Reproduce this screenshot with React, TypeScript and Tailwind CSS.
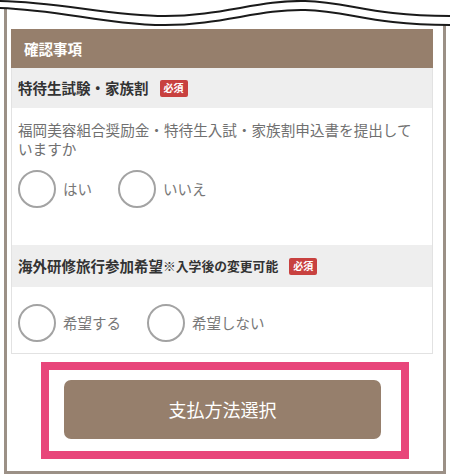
import React from "react";

const font = { fontFamily: '"Noto Sans CJK JP", "Noto Sans", sans-serif' };

function Radio({ label }: { label: string }) {
  return (
    <div className="flex items-center mr-[26px]">
      <div className="w-[38px] h-[38px] rounded-full border-2 border-[#a3a3a3] bg-white" />
      <span className="ml-[7px] text-[14.5px] text-[#777] leading-none">{label}</span>
    </div>
  );
}

function Badge() {
  return (
    <span className="ml-[11px] inline-flex items-center justify-center h-[17px] px-[4px] rounded-[2px] bg-[#c8413f] text-white text-[10px] font-bold leading-none">
      必須
    </span>
  );
}

export default function App() {
  return (
    <div className="relative w-[450px] h-[476px] bg-white overflow-hidden" style={font}>
      <div className="mx-[4px] h-[474px] border-x-[3px] border-b-[3px] border-[#9b9086] flex flex-col">
        <div className="mt-[29px] ml-[4px] w-[422px]">
          <div className="h-[39px] bg-[#967f6c] flex items-center pl-[13px] text-white text-[14.5px] font-bold">
            確認事項
          </div>
          <div className="border-x border-b border-[#e2e2e2]">
            <div className="h-[40px] bg-[#eeeeee] flex items-center pl-[6px] text-[14.5px] font-bold text-[#333]">
              特待生試験・家族割
              <Badge />
            </div>
            <div className="pt-[12px] pb-[37px] pl-[6px] pr-[6px]">
              <p className="text-[14.6px] leading-[19px] text-[#707070]">
                福岡美容組合奨励金・特待生入試・家族割申込書を提出して
                <br />
                いますか
              </p>
              <div className="mt-[12px] flex items-center">
                <Radio label="はい" />
                <Radio label="いいえ" />
              </div>
            </div>
            <div className="h-[42px] bg-[#eeeeee] flex items-center pl-[6px] text-[#333] font-bold">
              <span className="text-[14.5px]">海外研修旅行参加希望</span>
              <span className="text-[12.8px]">※入学後の変更可能</span>
              <Badge />
            </div>
            <div className="pt-[17px] pb-[11px] pl-[6px] flex items-center">
              <Radio label="希望する" />
              <Radio label="希望しない" />
            </div>
          </div>
        </div>
        <div className="mt-[8px] ml-[34px] w-[368px] h-[97px] border-[8px] border-[#e8457a] pt-[10px] pl-[15px]">
          <div className="w-[317px] h-[59px] rounded-[7px] bg-[#967f6c] flex items-center justify-center text-white text-[18px]">
            支払方法選択
          </div>
        </div>
      </div>
      <svg className="absolute top-0 left-0" width="450" height="32" viewBox="0 0 450 32">
        <path
          d="M0,0 L0,8 C60,10 110,25 165,25 S260,9 305,10 S370,25 450,25 L450,0 Z"
          fill="#ffffff"
        />
        <path
          d="M0,1 C60,2 110,16 165,16 S260,0 305,1 S370,16 450,16"
          fill="none"
          stroke="#1a1a1a"
          strokeWidth="2"
        />
        <path
          d="M0,8 C60,10 110,25 165,25 S260,9 305,10 S370,25 450,25"
          fill="none"
          stroke="#1a1a1a"
          strokeWidth="2"
        />
      </svg>
    </div>
  );
}
